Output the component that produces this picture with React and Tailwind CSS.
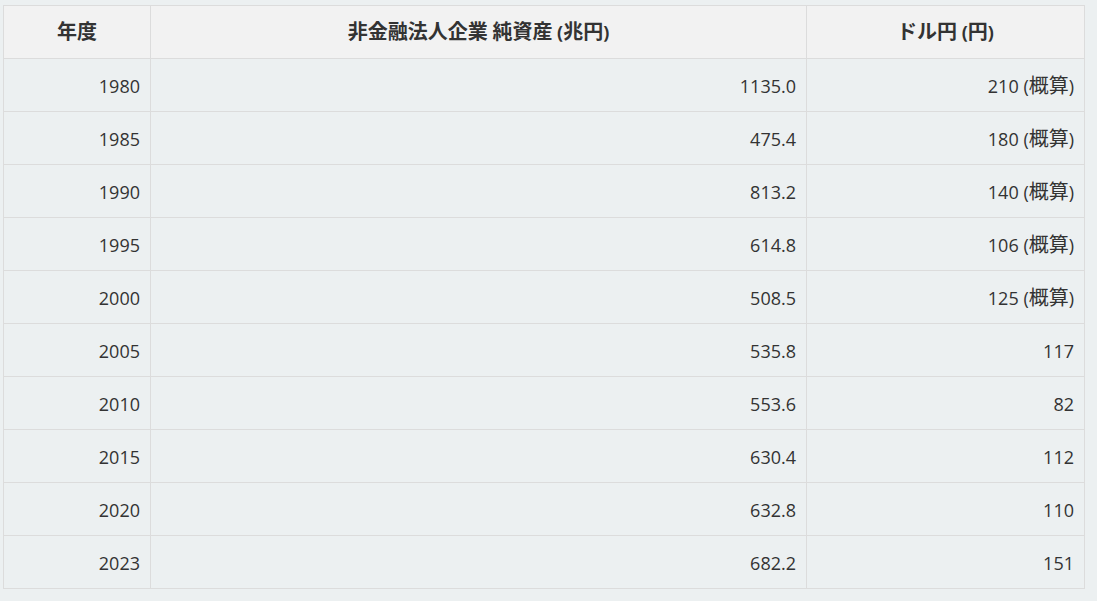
import React from "react";

const rows = [
  ["1980", "1135.0", "210", true],
  ["1985", "475.4", "180", true],
  ["1990", "813.2", "140", true],
  ["1995", "614.8", "106", true],
  ["2000", "508.5", "125", true],
  ["2005", "535.8", "117"],
  ["2010", "553.6", "82"],
  ["2015", "630.4", "112"],
  ["2020", "632.8", "110"],
  ["2023", "682.2", "151"],
];

// CJK glyphs in the shot render a bit larger than the Latin ones
const J = ({ children }) => <span className="text-[20px]">{children}</span>;

export default function App() {
  return (
    <div
      className="min-h-screen bg-[#ecf0f1] pt-[5px] pl-[3px] text-[#333]"
      style={{ fontFamily: '"Open Sans", "Noto Sans CJK JP", sans-serif' }}
    >
      <table className="table-fixed border-collapse w-[1081px] text-[18px]">
        <colgroup>
          <col className="w-[147px]" />
          <col className="w-[656px]" />
          <col className="w-[278px]" />
        </colgroup>
        <thead>
          <tr className="h-[53px] bg-[#f2f2f2]">
            <th className="border border-[#dcdcdc] font-bold text-center"><J>年度</J></th>
            <th className="border border-[#dcdcdc] font-bold text-center">
              <J>非金融法人企業</J> <J>純資産</J> (<J>兆円</J>)
            </th>
            <th className="border border-[#dcdcdc] font-bold text-center">
              <J>ドル円</J> (<J>円</J>)
            </th>
          </tr>
        </thead>
        <tbody>
          {rows.map(r => (
            <tr key={r[0]} className="h-[53px]">
              <td className="border border-[#dcdcdc] text-right pr-[10px] pt-[2px]">{r[0]}</td>
              <td className="border border-[#dcdcdc] text-right pr-[10px] pt-[2px]">{r[1]}</td>
              <td className="border border-[#dcdcdc] text-right pr-[10px] pt-[2px]">
                {r[2]}
                {r[3] && <> (<J>概算</J>)</>}
              </td>
            </tr>
          ))}
        </tbody>
      </table>
    </div>
  );
}
